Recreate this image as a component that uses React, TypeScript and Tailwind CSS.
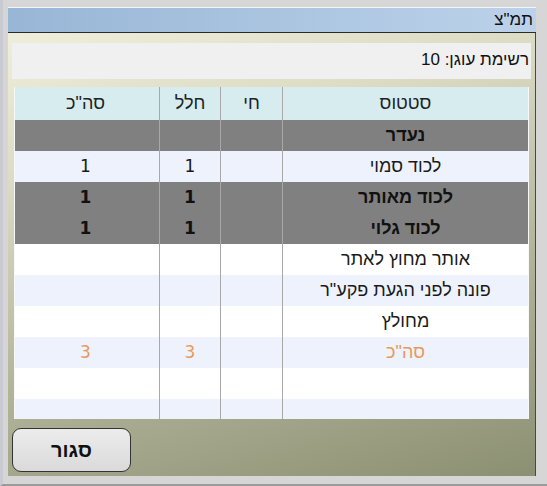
import React from "react";

type Row = { s: string; hai: string; halal: string; total: string; kind: "bold" | "white" | "light" | "sum" };

const rows: Row[] = [
  { s: "נעדר", hai: "", halal: "", total: "", kind: "bold" },
  { s: "לכוד סמוי", hai: "", halal: "1", total: "1", kind: "light" },
  { s: "לכוד מאותר", hai: "", halal: "1", total: "1", kind: "bold" },
  { s: "לכוד גלוי", hai: "", halal: "1", total: "1", kind: "bold" },
  { s: "אותר מחוץ לאתר", hai: "", halal: "", total: "", kind: "white" },
  { s: "פונה לפני הגעת פקע\"ר", hai: "", halal: "", total: "", kind: "light" },
  { s: "מחולץ", hai: "", halal: "", total: "", kind: "white" },
  { s: "סה\"כ", hai: "", halal: "3", total: "3", kind: "sum" },
  { s: "", hai: "", halal: "", total: "", kind: "white" },
  { s: "", hai: "", halal: "", total: "", kind: "light" },
];

function rowClass(k: Row["kind"]) {
  switch (k) {
    case "bold":
      return "bg-[#808080] font-bold text-[#111]";
    case "light":
      return "bg-[#edf2fc] text-[#1a1a1a]";
    case "sum":
      return "bg-[#edf2fc] text-[#e89a5a]";
    default:
      return "bg-white text-[#1a1a1a]";
  }
}

export default function App() {
  const font = { fontFamily: '"Liberation Sans", "DejaVu Sans", sans-serif' };
  const digit = { fontFamily: '"DejaVu Sans", "Liberation Sans", sans-serif' };
  return (
    <div
      className="w-[547px] h-[486px] bg-[#d6d6d6] pt-[7px] pl-[5px] pr-[11px] pb-[8px] flex flex-col border-l-[3px] border-l-[#c9c9d2] border-b-2 border-b-[#9a9a9a]"
      style={font}
      dir="rtl"
    >
      <div className="flex flex-col h-full border-t border-t-[#f4f4f4]">
        <div className="h-[25px] bg-gradient-to-l from-[#bcd2ea] to-[#98b6d6] flex items-center pr-[3px] text-[17px] text-[#111] border-b border-b-[#2a2a2a]">
          תמ"צ
        </div>
        <div className="flex-1 flex flex-col px-[4px] pt-[10px] pb-[4px] bg-[linear-gradient(165deg,#eeeedb_0%,#dcdcc4_25%,#b4b69c_60%,#8c9072_100%)] border-r border-r-[#4a4a3a]">
          <div className="h-[36px] bg-[#f0f0f0] pr-[2px] pt-[4px] text-[17px] text-[#111]">
            רשימת עוגן: 10
          </div>
          <div className="mt-[8px] mr-[2px] ml-[2px] h-[332px] overflow-hidden bg-white border-r border-r-[#f8f8f8] border-l border-l-[#f8f8f8]">
            <div className="grid grid-cols-[246px_62px_61px_147px] h-[33px] bg-[#d7ecef] text-[18px] text-[#222]">
              <div className="flex items-center justify-center border-l border-l-[#a8a8a8]">סטטוס</div>
              <div className="flex items-center justify-center border-l border-l-[#a8a8a8]">חי</div>
              <div className="flex items-center justify-center border-l border-l-[#a8a8a8]">חלל</div>
              <div className="flex items-center justify-center">סה"כ</div>
            </div>
            {rows.map((r, i) => (
              <div
                key={i}
                className={`grid grid-cols-[246px_62px_61px_147px] h-[31px] text-[18px] ${rowClass(r.kind)}`}
              >
                <div className="flex items-center justify-center border-l border-l-[#a8a8a8]">{r.s}</div>
                <div className="flex items-center justify-center border-l border-l-[#a8a8a8]">{r.hai}</div>
                <div className="flex items-center justify-center border-l border-l-[#a8a8a8] text-[17px]" style={digit}>{r.halal}</div>
                <div className="flex items-center justify-center text-[17px]" style={digit}>{r.total}</div>
              </div>
            ))}
          </div>
          <div className="flex-1 flex items-end justify-end">
            <button
              className="w-[119px] h-[44px] rounded-[9px] border border-[#333] bg-gradient-to-b from-[#ececec] to-[#dadada] text-[20px] font-bold text-[#111] flex items-center justify-center"
              style={font}
            >
              סגור
            </button>
          </div>
        </div>
      </div>
    </div>
  );
}
